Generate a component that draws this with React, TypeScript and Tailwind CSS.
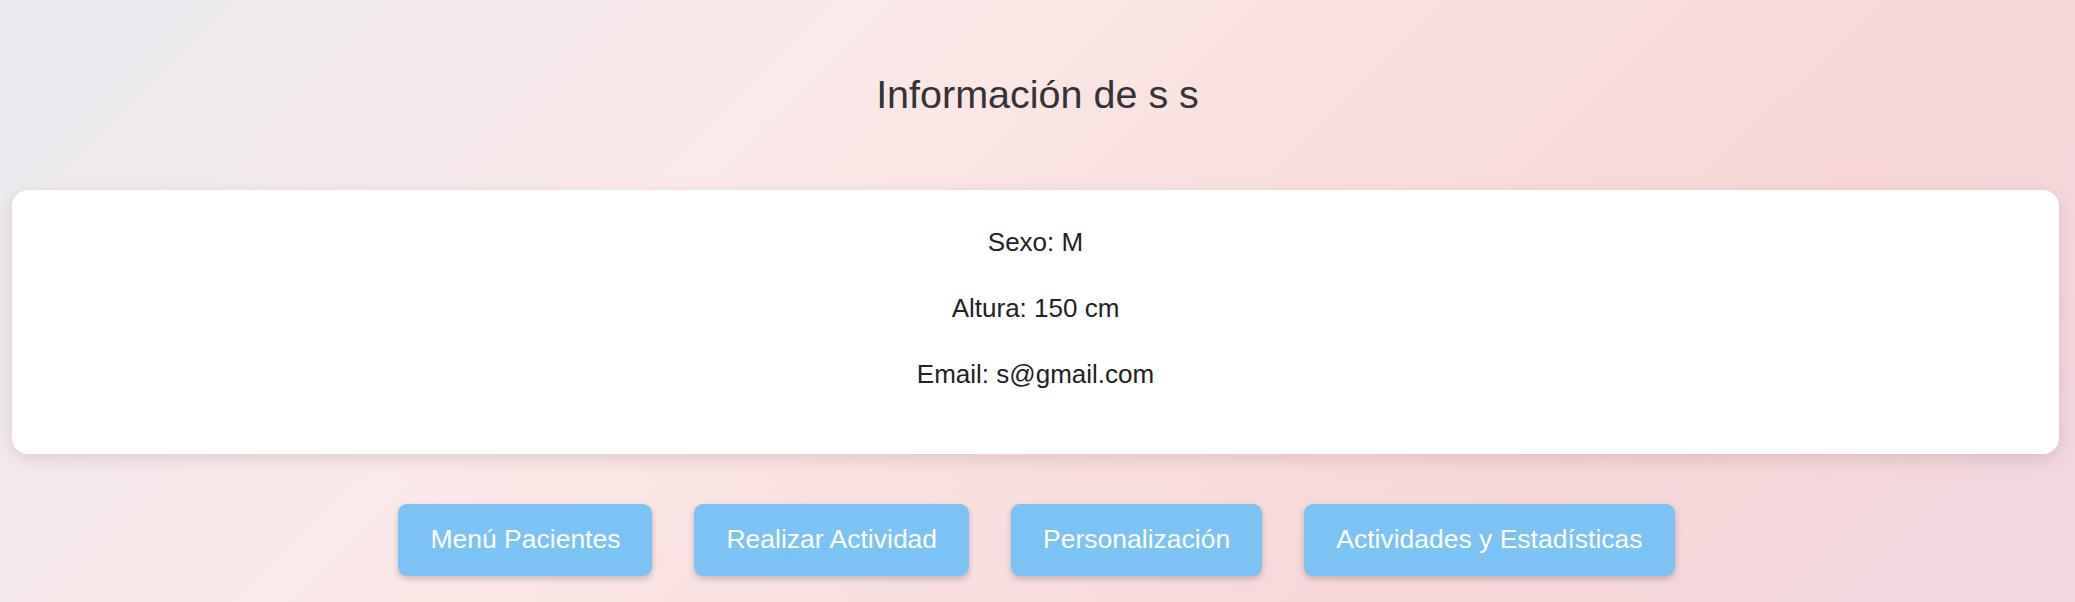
import React from "react";

const buttons = ["Menú Pacientes", "Realizar Actividad", "Personalización", "Actividades y Estadísticas"];

export default function App() {
  return (
    <div
      className="flex min-h-screen w-full flex-col items-center bg-[linear-gradient(135deg,#e8eaf0_0%,#fce9e9_32%,#f8d6d6_76%,#f0d7e1_100%)] pt-[72px]"
      style={{ fontFamily: '"Liberation Sans", Arial, sans-serif' }}
    >
      <h1 className="text-[39.5px] font-normal leading-[45px] text-[#333333]">Información de s s</h1>

      {/* patient info card */}
      <div className="mt-[73px] ml-[12px] mr-[16px] flex w-[calc(100%-28px)] flex-col items-center gap-[36px] self-start rounded-[16px] bg-white pt-[37px] pb-[65px] text-[26px] leading-[30px] text-[#222222] shadow-[0_5px_16px_rgba(120,80,80,0.18)]">
        <p>Sexo: M</p>
        <p>Altura: 150 cm</p>
        <p>Email: s@gmail.com</p>
      </div>

      <div className="mt-[50px] flex gap-[42px] pr-[2px]">
        {buttons.map((label) => (
          <button
            key={label}
            className="h-[72px] rounded-[9px] bg-[#7bc3f4] px-[32px] text-[26.5px] text-white shadow-[0_3px_6px_rgba(0,0,0,0.2)]"
          >
            {label}
          </button>
        ))}
      </div>
    </div>
  );
}
